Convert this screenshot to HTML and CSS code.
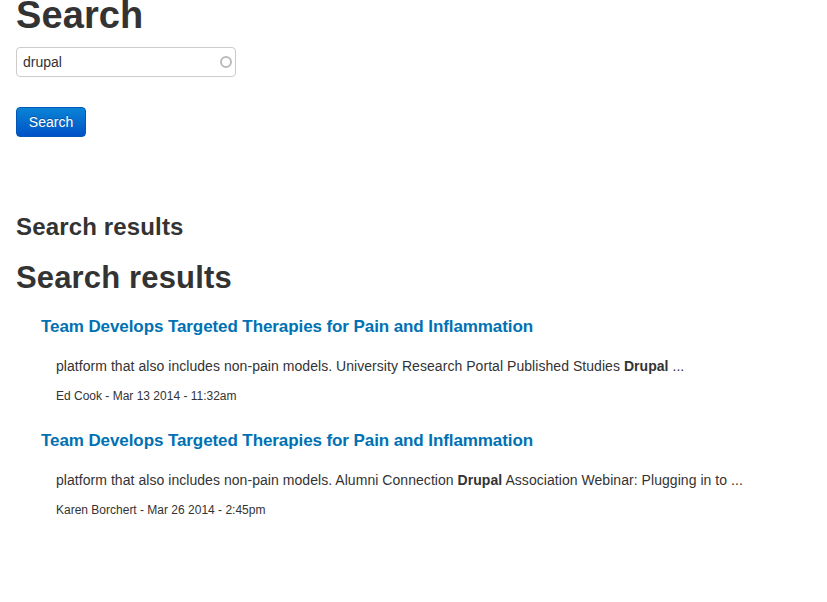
FILE: index.html
```html
<!DOCTYPE html>
<html lang="en">
<head>
<meta charset="utf-8">
<title>Search</title>
<link rel="stylesheet" href="styles.css">
</head>
<body>
<main class="page">
  <h1 class="page-title">Search</h1>
  <form class="search-form">
    <div class="field">
      <input class="field-input" type="text" value="drupal">
      <span class="throbber"></span>
    </div>
    <button class="btn" type="button">Search</button>
  </form>
  <h2 class="section-title">Search results</h2>
  <h2 class="results-title">Search results</h2>
  <ol class="results">
    <li class="result">
      <h3 class="result-title"><a href="#">Team Develops Targeted Therapies for Pain and Inflammation</a></h3>
      <p class="result-snippet">platform that also includes non-pain models. University Research Portal Published Studies <strong>Drupal</strong> ...</p>
      <p class="result-meta">Ed Cook - Mar 13 2014 - 11:32am</p>
    </li>
    <li class="result">
      <h3 class="result-title"><a href="#">Team Develops Targeted Therapies for Pain and Inflammation</a></h3>
      <p class="result-snippet">platform that also includes non-pain models. Alumni Connection <strong>Drupal</strong> Association Webinar: Plugging in to ...</p>
      <p class="result-meta">Karen Borchert - Mar 26 2014 - 2:45pm</p>
    </li>
  </ol>
</main>
</body>
</html>
```

FILE: styles.css
```css
html, body {
  margin: 0;
  padding: 0;
  background: #fff;
}
body {
  font-family: "Liberation Sans", Arial, Helvetica, sans-serif;
  color: #333;
}
.page {
  padding: 0 16px;
}
.page-title {
  margin: -4px 0 0;
  font-size: 38px;
  line-height: 38px;
  font-weight: bold;
  letter-spacing: 0.1px;
  color: #333;
}
.search-form {
  margin-top: 13px;
}
.field {
  position: relative;
  width: 220px;
}
.field-input {
  box-sizing: border-box;
  display: block;
  width: 220px;
  height: 30px;
  margin: 0;
  padding: 0 6px;
  border: 1px solid #ccc;
  border-radius: 4px;
  font-family: "Liberation Sans", Arial, sans-serif;
  font-size: 14px;
  color: #333;
  background: #fff;
  outline: none;
}
.throbber {
  position: absolute;
  right: 4px;
  top: 9px;
  width: 8px;
  height: 8px;
  border: 2px solid #bbb;
  border-radius: 50%;
}
.btn {
  display: block;
  box-sizing: border-box;
  margin-top: 30px;
  width: 70px;
  height: 30px;
  padding: 0;
  border: 1px solid #0057b8;
  border-radius: 4px;
  background: linear-gradient(#0a84d6, #0052c6);
  color: #fff;
  font-family: "Liberation Sans", Arial, sans-serif;
  font-size: 14px;
  line-height: 28px;
  text-align: center;
  text-shadow: 0 -1px 0 rgba(0, 0, 0, 0.25);
}
.section-title {
  margin: 78px 0 0;
  font-size: 24px;
  line-height: 24px;
  font-weight: bold;
  letter-spacing: 0.15px;
}
.results-title {
  margin: 23px 0 0;
  font-size: 31px;
  line-height: 32px;
  font-weight: bold;
  letter-spacing: 0.15px;
}
.results {
  list-style: none;
  margin: 23px 0 0;
  padding: 0 0 0 25px;
}
.result {
  margin: 0 0 27px;
}
.result-title {
  margin: 0;
  font-size: 17px;
  line-height: 20px;
  font-weight: bold;
  letter-spacing: -0.09px;
}
.result-title a {
  color: #0071b3;
  text-decoration: none;
}
.result-snippet {
  margin: 19px 0 0 15px;
  font-size: 14px;
  line-height: 20px;
  letter-spacing: 0.05px;
}
.result-meta {
  margin: 12px 0 0 15px;
  font-size: 12px;
  line-height: 16px;
}
```
